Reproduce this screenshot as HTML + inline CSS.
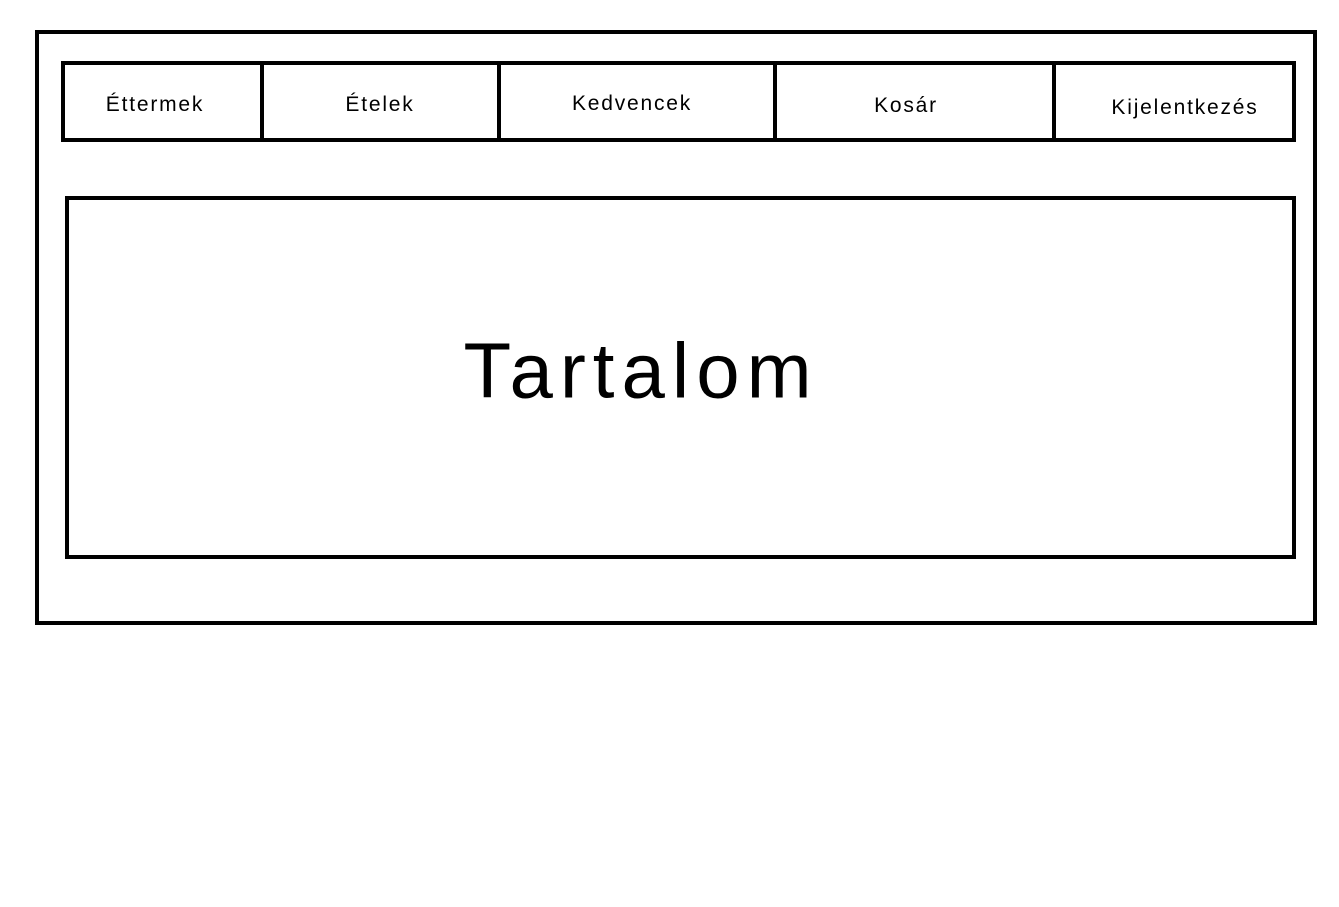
<!DOCTYPE html>
<html><head><meta charset="utf-8"><style>
body{margin:0;width:1339px;height:907px;background:#fff;position:relative;overflow:hidden;font-family:"Liberation Sans",sans-serif;color:#000}
.b{position:absolute;border:4px solid #000;box-sizing:border-box}
.v{position:absolute;background:#000;width:4px;top:61px;height:81px}
.t{position:absolute;font-size:21px;letter-spacing:1.8px;transform:translate(-50%,-50%);white-space:nowrap}
</style></head><body>
<div class="b" style="left:35px;top:30px;width:1282px;height:595px"></div>
<div class="b" style="left:61px;top:61px;width:1235px;height:81px"></div>
<div class="v" style="left:260px"></div>
<div class="v" style="left:497px"></div>
<div class="v" style="left:773px"></div>
<div class="v" style="left:1052px"></div>
<div class="b" style="left:65px;top:196px;width:1231px;height:363px"></div>
<div class="t" style="left:155px;top:105px">Éttermek</div>
<div class="t" style="left:380px;top:105px">Ételek</div>
<div class="t" style="left:632px;top:104px">Kedvencek</div>
<div class="t" style="left:906px;top:106px">Kosár</div>
<div class="t" style="left:1185px;top:108px">Kijelentkezés</div>
<div class="t" style="left:641px;top:371px;font-size:78px;letter-spacing:7px">Tartalom</div>
</body></html>
